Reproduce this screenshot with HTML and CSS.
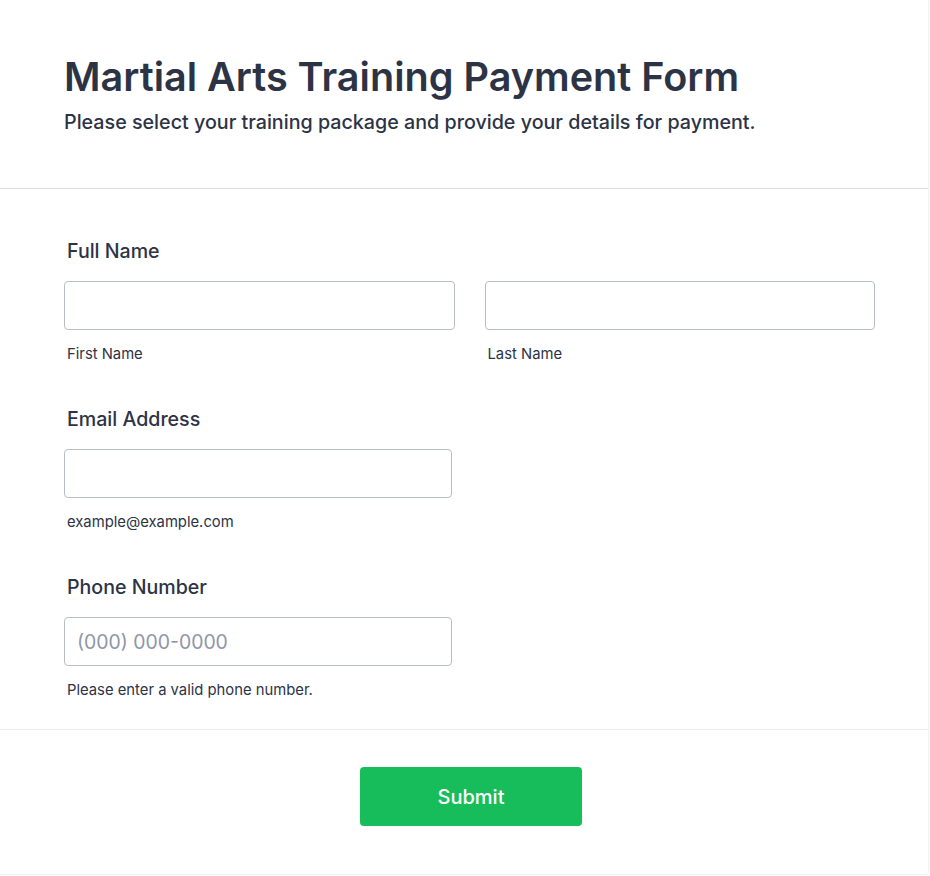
FILE: index.html
```html
<!DOCTYPE html>
<html lang="en">
<head>
    <meta charset="UTF-8">
    <meta name="viewport" content="width=device-width, initial-scale=1.0">
    <title>Martial Arts Training Payment Form</title>
    <link rel="stylesheet" href="styles.css">
</head>
<body>
<div class="form-card">
    <div class="form-header">
        <h1 class="form-title">Martial Arts Training Payment Form</h1>
        <p class="form-subtitle">Please select your training package and provide your details for payment.</p>
    </div>

    <div class="form-body">
        <div class="field">
            <label class="field-label" for="first-name">Full Name</label>
            <div class="name-row">
                <div class="name-col">
                    <input type="text" id="first-name" class="input-field">
                    <span class="sub-label">First Name</span>
                </div>
                <div class="name-col">
                    <input type="text" id="last-name" class="input-field">
                    <span class="sub-label">Last Name</span>
                </div>
            </div>
        </div>

        <div class="field">
            <label class="field-label" for="email">Email Address</label>
            <input type="email" id="email" class="input-field input-half">
            <span class="sub-label">example@example.com</span>
        </div>

        <div class="field">
            <label class="field-label" for="phone">Phone Number</label>
            <input type="tel" id="phone" class="input-field input-half" placeholder="(000) 000-0000">
            <span class="sub-label">Please enter a valid phone number.</span>
        </div>
    </div>

    <div class="form-footer">
        <button type="submit" class="submit-btn">Submit</button>
    </div>
</div>
</body>
</html>
```

FILE: styles.css
```css
body {
    margin: 0;
    padding: 0;
    background: #ffffff;
    font-family: Inter, "Noto Sans", sans-serif;
    color: #2c3345;
}
.form-card {
    width: 929px;
    height: 875px;
    box-sizing: border-box;
    background: #ffffff;
    border-right: 1px solid #f1f2f5;
    border-bottom: 1px solid #f1f2f5;
    border-radius: 0 0 4px 0;
}
.form-header {
    padding: 53px 54px 54px 64px;
    border-bottom: 1px solid #dadde5;
}
.form-title {
    margin: 0;
    font-size: 39.6px;
    line-height: 48px;
    font-weight: 600;
}
.form-subtitle {
    margin: 9px 0 0 0;
    font-size: 19.7px;
    line-height: 24px;
    font-weight: 500;
}
.form-body {
    padding: 50px 53px 30px 64px;
    border-bottom: 1px solid #eaebf0;
}
.field {
    display: flex;
    flex-direction: column;
    margin-bottom: 44px;
}
.field:last-child {
    margin-bottom: 0;
}
.field-label {
    font-size: 19.6px;
    line-height: 24px;
    font-weight: 500;
    padding-left: 3px;
    margin-bottom: 18px;
}
.name-row {
    display: flex;
    gap: 30px;
}
.name-col {
    flex: 1;
    display: flex;
    flex-direction: column;
}
.input-field {
    width: 100%;
    height: 49px;
    box-sizing: border-box;
    padding: 0 12px;
    border: 1px solid #b8bdc9;
    border-radius: 4px;
    background: #ffffff;
    font-family: Inter, "Noto Sans", sans-serif;
    font-size: 19.4px;
    color: #2c3345;
}
.input-field::placeholder {
    color: #8f96a8;
}
.input-half {
    width: 388px;
}
.sub-label {
    margin-top: 15px;
    padding-left: 3px;
    font-size: 14.8px;
    line-height: 18px;
}
.form-footer {
    display: flex;
    justify-content: center;
    padding: 37px 54px 0 68px;
}
.submit-btn {
    width: 222px;
    height: 59px;
    background-color: #18bd5b;
    color: #ffffff;
    border: none;
    border-radius: 4px;
    font-family: Inter, "Noto Sans", sans-serif;
    font-size: 20px;
    font-weight: 500;
}
```
